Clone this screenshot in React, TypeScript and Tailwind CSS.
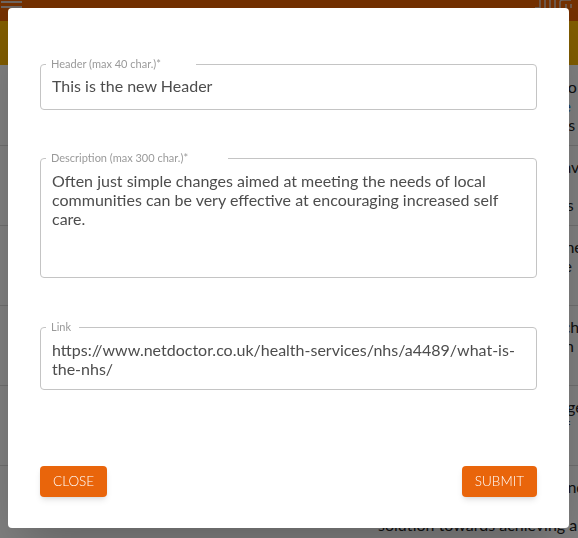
import React from 'react';

interface Row {
  status: string;
  category: string;
  lines: string[];
}

const rows: Row[] = [
  { status: 'Published', category: 'Wellbeing', lines: ['Local groups have formed to', 'help neighbours to be more', 'active and to care for others'] },
  { status: 'Published', category: 'Community', lines: ['Small volunteer schemes have', 'helped the local population', 'to adapt and support others'] },
  { status: 'Draft', category: 'Other', lines: ['A place where people can meet', 'and discuss how to improve', 'the care that they receive'] },
  { status: 'Published', category: 'Health', lines: ['Pharmacists work with teach', 'practices so that people can', 'get the help they need'] },
  { status: 'Draft', category: 'Other', lines: ['Groups that share knowledge', 'and find new models of self', 'care in the local area'] },
  { status: 'Published', category: 'Other', lines: ['Working with partners to find', 'a shared and fair long term', 'solution towards achieving a sustainable'] },
];

function Field({
  label,
  legendWidth,
  value,
  contentClass,
}: {
  label: string;
  legendWidth: string;
  value: string;
  contentClass: string;
}) {
  return (
    <fieldset className="border border-[#c4c4c4] rounded-[4px] px-[5px] m-0 min-w-0">
      <legend className={`${legendWidth} pl-[5px] text-[11px] leading-[14px] text-[#9a9a9a] whitespace-nowrap`}>
        {label}
      </legend>
      <div className={`px-[6px] text-[16px] leading-[19px] text-[#4d4d4d] break-words ${contentClass}`}>
        {value}
      </div>
    </fieldset>
  );
}

export default function App() {
  return (
    <div className="relative h-[538px] w-full overflow-hidden bg-white font-['Lato','Noto_Sans',sans-serif]">
      {/* page underneath */}
      <div className="h-[21px] bg-[#e66000] flex items-start justify-between">
        <div className="flex flex-col gap-[3px] pt-[1px] pl-[1px]">
          <div className="h-[2px] w-[21px] bg-[#d8c8c0]" />
          <div className="h-[2px] w-[21px] bg-[#d8c8c0]" />
        </div>
        <svg width="42" height="10" viewBox="0 0 42 10" className="mr-[3px]" fill="none" stroke="#d8c8c0" strokeWidth="1.5">
          <path d="M2 8 h5 v-8" />
          <path d="M12 0 v8" />
          <path d="M17 0 v8 M22 0 v8" />
          <path d="M27 8 v-6 q0-2 3-2 h8" />
          <path d="M33 4 v4 M38 4 v4" />
        </svg>
      </div>
      <div className="h-[44px] bg-[#ffb800]" />
      <div className="text-[16px] leading-[19px] text-[#222] overflow-hidden">
        {rows.map((r, i) => (
          <div key={i} className="h-[80px] border-b border-[#ddd] grid grid-cols-[118px_245px_1fr] items-center pl-[15px] first:h-[81px]">
            <div>{r.status}</div>
            <div>{r.category}</div>
            <div className="whitespace-nowrap overflow-hidden">
              {r.lines.map((l, j) => (
                <div key={j} className={j === 1 && i < 2 ? 'text-[#1976d2]' : ''}>
                  {l}
                </div>
              ))}
            </div>
          </div>
        ))}
      </div>

      {/* dialog */}
      <div className="fixed inset-0 bg-black/50 flex items-start justify-start pl-[8px] pt-[8px]">
        <div className="w-[561px] bg-white rounded-[4px] shadow-2xl px-[32px] pt-[49px] pb-[31px] flex flex-col">
          <Field
            label="Header (max 40 char.)*"
            legendWidth="w-[150px]"
            value="This is the new Header"
            contentClass="pt-[5px] pb-[14px]"
          />
          <div className="mt-[41px]">
            <Field
              label="Description (max 300 char.)*"
              legendWidth="w-[182px]"
              value="Often just simple changes aimed at meeting the needs of local communities can be very effective at encouraging increased self care."
              contentClass="pt-[6px] pb-[12px] h-[112px] box-border"
            />
          </div>
          <div className="mt-[42px]">
            <Field
              label="Link"
              legendWidth="w-[33px]"
              value="https://www.netdoctor.co.uk/health-services/nhs/a4489/what-is-the-nhs/"
              contentClass="pt-[6px] pb-[11px]"
            />
          </div>
          <div className="mt-[76px] flex justify-between">
            <button className="h-[31px] px-[13px] rounded-[4px] bg-[#e9650b] text-white text-[13.5px] font-light uppercase shadow-md">
              Close
            </button>
            <button className="h-[31px] px-[13px] rounded-[4px] bg-[#e9650b] text-white text-[13.5px] font-light uppercase shadow-md">
              Submit
            </button>
          </div>
        </div>
      </div>
    </div>
  );
}
